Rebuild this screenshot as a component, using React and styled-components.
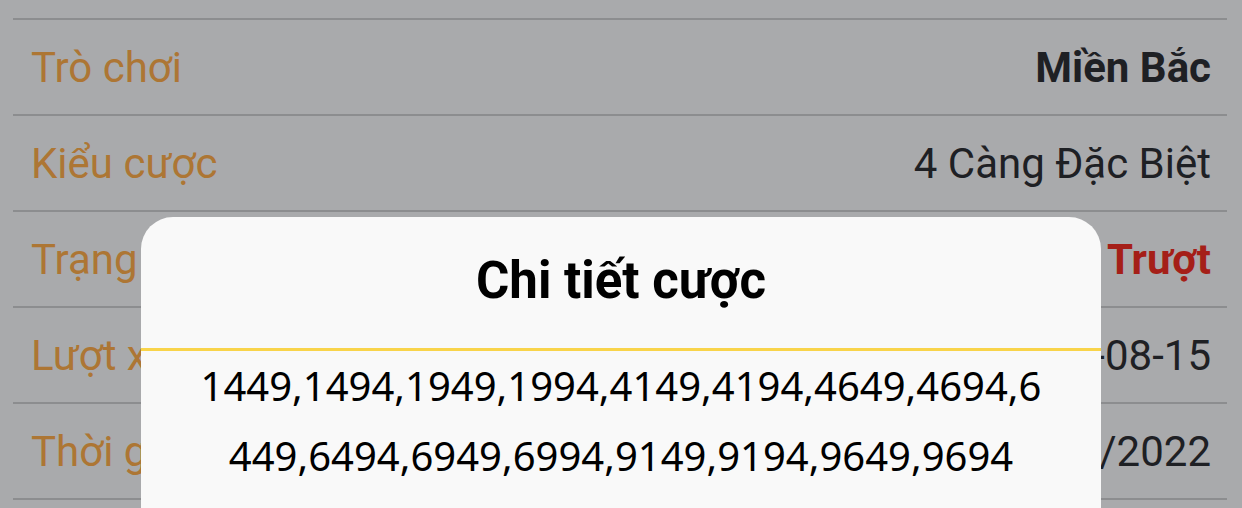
import styled, { createGlobalStyle } from 'styled-components';

const rows = [
  { label: 'Trò chơi', value: 'Miền Bắc', tone: 'bold' },
  { label: 'Kiểu cược', value: '4 Càng Đặc Biệt' },
  { label: 'Trạng thái', value: 'Trượt', tone: 'lose' },
  { label: 'Lượt xổ', value: '2022-08-15' },
  { label: 'Thời gian', value: '15/08/2022' },
];

const numbers = '1449,1494,1949,1994,4149,4194,4649,4694,6449,6494,6949,6994,9149,9194,9649,9694';

const App = () => {
  return (
    <>
      <GlobalStyle />
      <Page>
        <List>
          {rows.map((r) => (
            <Row key={r.label}>
              <Label>{r.label}</Label>
              <Value tone={r.tone}>{r.value}</Value>
            </Row>
          ))}
        </List>
      </Page>
      <Sheet>
        <SheetTitle>Chi tiết cược</SheetTitle>
        <SheetBody>{numbers}</SheetBody>
      </Sheet>
    </>
  );
};

const GlobalStyle = createGlobalStyle`
  html, body {
    margin: 0;
    padding: 0;
    height: 100%;
    overflow: hidden;
    background: #a9aaac;
  }
  body {
    font-family: Roboto, "Liberation Sans", sans-serif;
  }
`;

const Page = styled.div`
  padding: 18px 15px 0 13px;
  background: #a9aaac;
`;

const List = styled.div`
  display: flex;
  flex-direction: column;
  border-bottom: 2px solid #8c8d8f;
`;

const Row = styled.div`
  display: flex;
  align-items: center;
  justify-content: space-between;
  height: 94px;
  padding: 0 16px 0 18px;
  border-top: 2px solid #8c8d8f;
`;

const Label = styled.span`
  font-size: 42px;
  color: #ad7634;
`;

const Value = styled.span`
  font-size: 42px;
  font-weight: ${(p) => (p.tone ? 700 : 400)};
  color: ${(p) => (p.tone === 'lose' ? '#a51f18' : '#1e2024')};
`;

const Sheet = styled.div`
  position: fixed;
  left: 141px;
  top: 217px;
  width: 960px;
  height: 400px;
  background: #f9f9f9;
  border-radius: 32px 32px 0 0;
`;

const SheetTitle = styled.div`
  height: 126px;
  padding-bottom: 5px;
  display: flex;
  align-items: center;
  justify-content: center;
  font-size: 51px;
  font-weight: 700;
  color: #000;
  border-bottom: 3px solid #f9d44a;
`;

const SheetBody = styled.div`
  padding: 0 52px;
  font-family: "Noto Sans", "Open Sans", sans-serif;
  font-size: 40px;
  line-height: 70px;
  text-align: center;
  color: #000;
  word-break: break-all;
`;

export default App;
